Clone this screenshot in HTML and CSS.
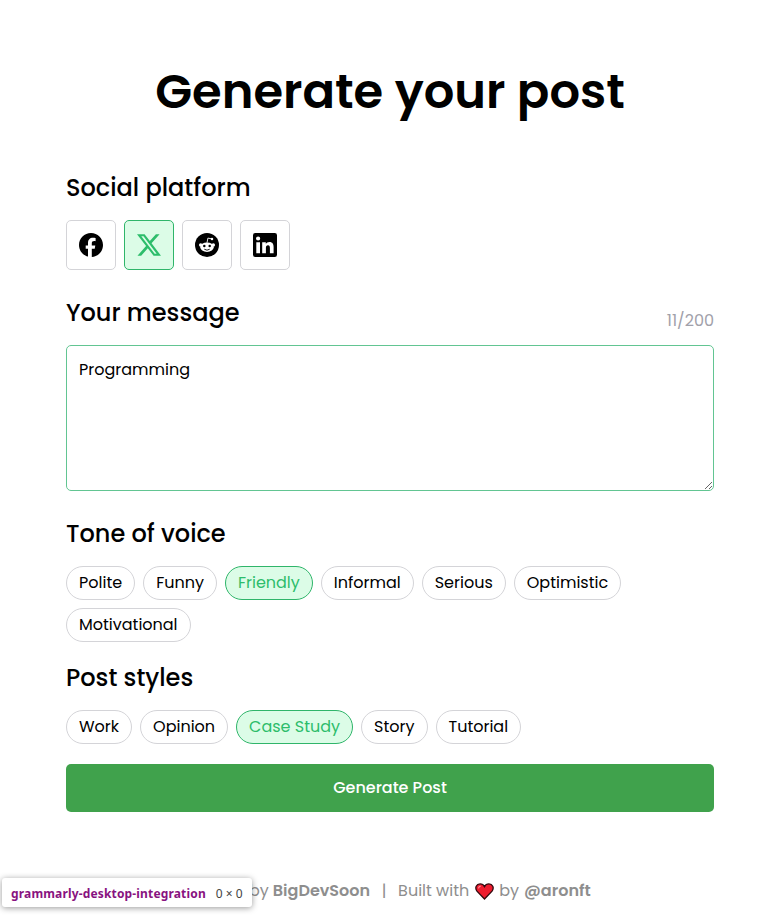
FILE: index.html
```html
<!DOCTYPE html>
<html lang="en">
<head>
<meta charset="utf-8">
<title>Generate your post</title>
<link rel="stylesheet" href="styles.css">
</head>
<body>
<main class="page">
  <h1 class="title">Generate your post</h1>

  <section class="section">
    <h2 class="heading">Social platform</h2>
    <div class="platforms">
      <button class="platform" aria-label="Facebook"><svg viewBox="0 0 24 24"><path d="M24 12C24 5.4 18.6 0 12 0S0 5.400 0 12c0 5.600 3.800 10.300 9 11.600V15.800H6.700V12.400H9V10.300C9 6.500 10.700 4.700 14.200 4.700c.7 0 1.900.1 2.400.3V8.200c-.3 0-.7-.1-1.300-.1-1.800 0-2.500.7-2.500 2.400v1.900h3.500l-.6 3.400h-2.900V24C19.200 23.500 24 18.300 24 12Z"/></svg></button>
      <button class="platform active" aria-label="X"><svg viewBox="0 0 24 24"><path d="M18.901 1.153h3.68l-8.04 9.19L24 22.846h-7.406l-5.8-7.584-6.638 7.584H.474l8.6-9.83L0 1.154h7.594l5.243 6.932ZM17.61 20.644h2.039L6.486 3.24H4.298Z"/></svg></button>
      <button class="platform" aria-label="Reddit"><svg viewBox="0 0 24 24"><circle cx="12" cy="12" r="12"/><g class="cut"><ellipse cx="12" cy="14.2" rx="6.7" ry="4.8"/><circle cx="5.700" cy="11.900" r="1.750"/><circle cx="18.300" cy="11.900" r="1.750"/><circle cx="17" cy="5.900" r="1.250"/></g><path class="antenna" d="M12 9.800 12.900 5.100 17 5.900"/><circle cx="9.300" cy="13" r="1.250"/><circle cx="14.700" cy="13" r="1.250"/><path class="smile" d="M9.300 16.200Q12 18.200 14.700 16.200"/></svg></button>
      <button class="platform" aria-label="LinkedIn"><svg viewBox="0 0 24 24"><path fill-rule="evenodd" d="M2.2 0H21.8A2.2 2.2 0 0 1 24 2.2V21.8A2.2 2.2 0 0 1 21.8 24H2.2A2.2 2.2 0 0 1 0 21.8V2.2A2.2 2.2 0 0 1 2.2 0ZM3.3 9.2V20.3H7V9.2ZM5.1 3.4A2.1 2.1 0 1 0 5.1 7.6 2.1 2.1 0 0 0 5.1 3.4ZM9.2 9.2V20.3H12.9V14.8C12.9 13.3 13.5 12.2 15 12.2S16.9 13.5 16.9 14.9V20.3H20.6V14.1C20.6 11 19.7 8.9 16.4 8.9 14.7 8.9 13.4 9.7 12.8 10.8V9.2Z"/></svg></button>
    </div>
  </section>

  <section class="section">
    <div class="message-head">
      <h2 class="heading">Your message</h2>
      <span class="counter">11/200</span>
    </div>
    <textarea class="message" spellcheck="false">Programming</textarea>
  </section>

  <section class="section section-tone">
    <h2 class="heading">Tone of voice</h2>
    <div class="chips">
      <button class="chip">Polite</button>
      <button class="chip">Funny</button>
      <button class="chip active">Friendly</button>
      <button class="chip">Informal</button>
      <button class="chip">Serious</button>
      <button class="chip">Optimistic</button>
      <button class="chip">Motivational</button>
    </div>
  </section>

  <section class="section section-styles">
    <h2 class="heading">Post styles</h2>
    <div class="chips">
      <button class="chip">Work</button>
      <button class="chip">Opinion</button>
      <button class="chip active">Case Study</button>
      <button class="chip">Story</button>
      <button class="chip">Tutorial</button>
    </div>
  </section>

  <button class="submit">Generate Post</button>
</main>

<footer class="footer">
  <span>by</span>
  <b class="brand">BigDevSoon</b>
  <span class="divider">|</span>
  <span>Built with</span>
  <svg class="heart" viewBox="0 0 20 18"><path class="heart-fill" d="M10 17 2 8.600C-.6 5 1.500 1 5.300 1 7.600 1 9.200 2.200 10 3.800 10.800 2.200 12.400 1 14.700 1 18.500 1 20.600 5 18 8.600Z"/><path class="heart-shine" d="M3.600 5.600Q4 3.600 6 3.300"/></svg>
  <span>by</span>
  <b class="author">@aronft</b>
</footer>

<div class="inspector"><b class="tag">grammarly-desktop-integration</b><span class="size">0 × 0</span></div>
</body>
</html>
```
FILE: styles.css
```css
* { box-sizing: border-box; }

body {
  margin: 0;
  height: 915px;
  overflow: hidden;
  background: #fff;
  color: #000;
  font: 400 16px/24px Poppins, Inter, sans-serif;
}

button, textarea {
  font: inherit;
  color: inherit;
}

.page { padding: 56px 66px 0; }

.title {
  margin: 0 0 42px;
  font-size: 48px;
  line-height: 72px;
  font-weight: 600;
  text-align: center;
}

.section { margin-bottom: 25px; }
.section-tone { margin-bottom: 18px; }
.section-styles { margin-bottom: 20px; }

.heading {
  margin: 0 0 14px;
  font-size: 24px;
  line-height: 36px;
  font-weight: 500;
}

.platforms { display: flex; gap: 8px; }

.platform {
  display: grid;
  place-items: center;
  width: 50px;
  height: 50px;
  padding: 0;
  border: 1px solid #d4d4d8;
  border-radius: 5px;
  background: #fff;
}
.platform svg { width: 24px; height: 24px; fill: #000; }
.platform .cut { fill: #fff; }
.platform .antenna { fill: none; stroke: #fff; stroke-width: .9; }
.platform .smile { fill: none; stroke: #000; stroke-width: .9; }

.platform.active, .chip.active {
  border-color: #2fb56a;
  background: #dcfce7;
  color: #2dbd6b;
}
.platform.active svg { fill: #2dbd6b; }

.message-head { display: flex; justify-content: space-between; }

.counter {
  margin-top: 14px;
  color: #a1a1aa;
}

.message {
  display: block;
  width: 100%;
  height: 146px;
  padding: 12px;
  border: 1px solid #62c592;
  border-radius: 5px;
  outline: 0;
  background: #fff;
}

.chips { display: flex; flex-wrap: wrap; gap: 8px; }

.chip {
  height: 34px;
  padding: 0 12px 1px;
  border: 1px solid #d4d4d8;
  border-radius: 17px;
  background: #fff;
}

.submit {
  width: 100%;
  height: 48px;
  padding: 0 0 1px;
  border: 0;
  border-radius: 5px;
  background: #40a24c;
  color: #fff;
  font-weight: 500;
}

.footer {
  display: flex;
  align-items: center;
  margin: 67px 0 0 249px;
  color: #8e8e8e;
}
.footer b { font-weight: 600; }
.brand { margin-left: 4px; }
.divider { width: 28px; text-align: center; }
.heart { width: 19px; height: 17px; margin: 0 5px 0 6px; }
.heart-fill { fill: #ee1c2e; stroke: #32080d; stroke-width: 1.4; }
.heart-shine { fill: none; stroke: #ff8a94; stroke-width: 1.2; }
.author { margin-left: 5px; }

.inspector {
  position: absolute;
  left: 2px;
  top: 878px;
  display: flex;
  align-items: center;
  width: 250px;
  height: 29px;
  padding: 2px 9px 0;
  border-radius: 3px;
  background: #fff;
  box-shadow: 0 1px 6px rgba(0, 0, 0, .4);
  font: 12px/18px "Noto Sans", sans-serif;
  white-space: nowrap;
}
.tag { color: #881280; letter-spacing: .16px; }
.size { margin-left: 10px; color: #444; }
```
